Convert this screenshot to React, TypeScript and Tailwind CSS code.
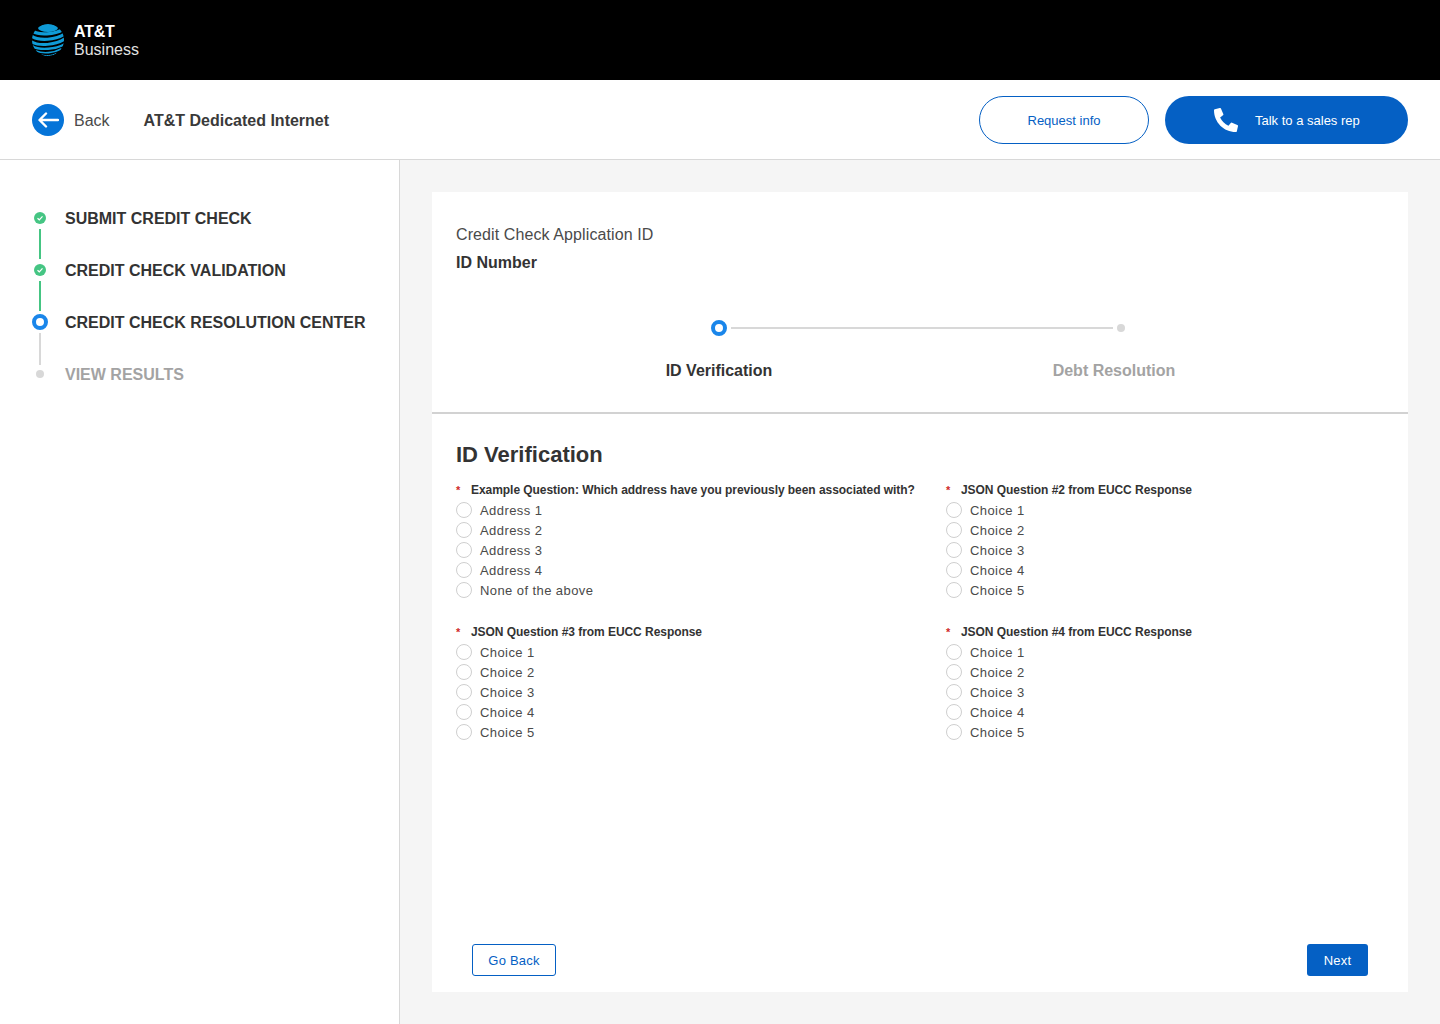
import { FaPhoneAlt } from "react-icons/fa";

const sideSteps = [
  { label: "SUBMIT CREDIT CHECK", state: "done" },
  { label: "CREDIT CHECK VALIDATION", state: "done" },
  { label: "CREDIT CHECK RESOLUTION CENTER", state: "active" },
  { label: "VIEW RESULTS", state: "todo" },
];

const choices = ["Choice 1", "Choice 2", "Choice 3", "Choice 4", "Choice 5"];

const questions = [
  {
    title: "Example Question: Which address have you previously been associated with?",
    options: ["Address 1", "Address 2", "Address 3", "Address 4", "None of the above"],
  },
  { title: "JSON Question #2 from EUCC Response", options: choices },
  { title: "JSON Question #3 from EUCC Response", options: choices },
  { title: "JSON Question #4 from EUCC Response", options: choices },
];

function GlobeLogo() {
  return (
    <svg width="32" height="32" viewBox="0 0 32 32">
      <defs>
        <clipPath id="globe">
          <circle cx="16" cy="16" r="16" />
        </clipPath>
      </defs>
      <g clipPath="url(#globe)" fill="none" stroke="#0f9bd7" strokeLinecap="round">
        <ellipse cx="16" cy="4" rx="10" ry="4" fill="#0f9bd7" stroke="none" />
        <path d="M-1 6 C5 12 24 11 33 4" strokeWidth="3.2" />
        <path d="M-2 11 C6 18 25 16 34 9" strokeWidth="3.2" />
        <path d="M-2 17 C6 23 25 21 34 14" strokeWidth="3" />
        <path d="M0 22 C8 27 24 25 33 20" strokeWidth="2.4" />
        <path d="M4 27 C11 30 22 29 29 25" strokeWidth="1.6" />
        <path d="M10 31 C14 32 19 32 24 29.5" strokeWidth="1" />
      </g>
    </svg>
  );
}

function SideDot({ state }: { state: string }) {
  if (state === "done") {
    return (
      <span className="flex h-3 w-3 items-center justify-center rounded-full bg-[#45c583]">
        <svg width="8" height="8" viewBox="0 0 8 8" fill="none" stroke="#ffffff" strokeWidth="1.2">
          <path d="M1.5 4.2 L3.3 5.8 L6.5 2.4" />
        </svg>
      </span>
    );
  }
  if (state === "active") {
    return <span className="h-4 w-4 rounded-full border-[4px] border-[#1a86ea] bg-white" />;
  }
  return <span className="h-2 w-2 rounded-full bg-[#d8d8d8]" />;
}

function Radio({ label }: { label: string }) {
  return (
    <label className="flex h-5 items-center">
      <span className="h-4 w-4 rounded-full border border-[#cfcfcf] bg-white" />
      <span className="ml-2 pt-0.5 text-[13px] tracking-[0.42px] text-[#4a4a4a]">{label}</span>
    </label>
  );
}

function Question({ title, options }: { title: string; options: string[] }) {
  return (
    <div>
      <div className="flex h-5 items-center">
        <span className="w-[15px] text-[11px] font-bold text-[#cf2a27]">*</span>
        <span className="text-[12px] font-bold tracking-[-0.05px] text-[#333333]">{title}</span>
      </div>
      {options.map((o) => (
        <Radio key={o} label={o} />
      ))}
    </div>
  );
}

export default function App() {
  return (
    <div className="flex h-[1024px] flex-col overflow-hidden bg-white font-['Liberation_Sans',sans-serif] text-[#333333]">
      <header className="flex h-20 items-center gap-2.5 bg-black pl-8 text-white">
        <GlobeLogo />
        <div className="pt-px text-[16px] leading-[18px]">
          <div className="font-bold tracking-[-0.2px]">AT&amp;T</div>
          <div className="text-[#e2e2e2]">Business</div>
        </div>
      </header>

      <div className="flex h-20 items-center border-b border-[#d8d8d8] pl-8 pr-8">
        <span className="flex h-8 w-8 items-center justify-center rounded-full bg-[#0574d8]">
          <svg width="22" height="22" viewBox="0 0 22 22" fill="none" stroke="#ffffff" strokeWidth="2.4" strokeLinecap="round" strokeLinejoin="round">
            <path d="M21 11 H3 M9 4.5 L2.5 11 L9 17.5" />
          </svg>
        </span>
        <span className="ml-2.5 pt-0.5 text-[16px] text-[#4a4a4a]">Back</span>
        <span className="ml-[34px] pt-0.5 text-[16px] font-bold text-[#3a3a3a]">AT&amp;T Dedicated Internet</span>
        <button className="ml-auto h-12 w-[170px] rounded-full border border-[#0560c4] pt-0.5 text-[13px] text-[#0560c4]">
          Request info
        </button>
        <button className="ml-4 flex h-12 w-[243px] items-center rounded-full bg-[#0560c4] pl-[49px] text-[13px] text-white">
          <FaPhoneAlt className="h-6 w-6" />
          <span className="ml-[17px] pt-0.5">Talk to a sales rep</span>
        </button>
      </div>

      <div className="flex flex-1">
        <aside className="w-[400px] border-r border-[#d8d8d8] pl-8 pt-[47px]">
          {sideSteps.map((step, i) => (
            <div key={step.label}>
              <div className="flex h-[22px] items-center">
                <span className="flex w-4 justify-center">
                  <SideDot state={step.state} />
                </span>
                <span
                  className={`ml-[17px] pt-0.5 text-[16px] font-bold ${step.state === "todo" ? "text-[#a3a3a3]" : "text-[#333333]"}`}
                >
                  {step.label}
                </span>
              </div>
              {i < sideSteps.length - 1 && (
                <div className="flex h-[30px] w-4 justify-center">
                  <span className={`w-0.5 ${step.state === "done" ? "h-[30px] bg-[#45c583]" : "h-8 bg-[#d8d8d8]"}`} />
                </div>
              )}
            </div>
          ))}
        </aside>

        <main className="flex-1 bg-[#f5f5f5] p-8">
          <section className="flex h-[800px] flex-col bg-white">
            <div className="h-[222px] border-b-2 border-[#d2d2d2] px-6 pt-[31px]">
              <p className="text-[16px] leading-6 tracking-[0.1px] text-[#4a4a4a]">Credit Check Application ID</p>
              <p className="mt-1 text-[16px] font-bold leading-6">ID Number</p>
              <div className="mt-[45px] flex h-4 items-center pl-[255px]">
                <span className="h-4 w-4 rounded-full border-[4px] border-[#1a86ea] bg-white" />
                <span className="ml-1 h-0.5 w-[382px] bg-[#d8d8d8]" />
                <span className="ml-1 h-2 w-2 rounded-full bg-[#d8d8d8]" />
              </div>
              <div className="mt-[23px] flex text-[16px] font-bold">
                <span className="ml-[185px] w-[156px] text-center">ID Verification</span>
                <span className="ml-[239px] w-[156px] text-center text-[#a3a3a3]">Debt Resolution</span>
              </div>
            </div>

            <div className="px-6 pt-[25px]">
              <h2 className="text-[22px] font-bold leading-8">ID Verification</h2>
              <div className="mt-[9px] grid grid-cols-[490px_1fr] gap-y-[22px]">
                {questions.map((q) => (
                  <Question key={q.title} title={q.title} options={q.options} />
                ))}
              </div>
            </div>

            <div className="mt-auto flex justify-between px-10 pb-4">
              <button className="h-8 w-[84px] rounded-[3px] border border-[#0560c4] pt-px text-[13px] tracking-[0.2px] text-[#0560c4]">
                Go Back
              </button>
              <button className="h-8 w-[61px] rounded-[3px] bg-[#0560c4] pt-px text-[13px] tracking-[0.2px] text-white">
                Next
              </button>
            </div>
          </section>
        </main>
      </div>
    </div>
  );
}
